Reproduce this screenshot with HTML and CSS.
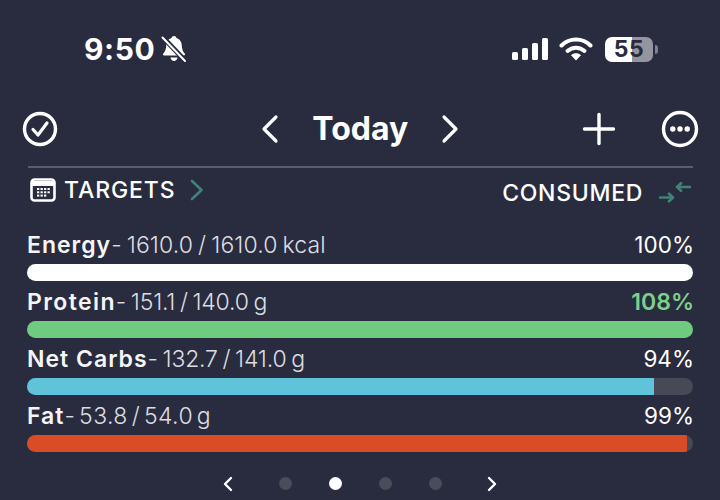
FILE: index.html
```html
<!DOCTYPE html>
<html lang="en">
<head>
<meta charset="utf-8">
<title>Today</title>
<link rel="stylesheet" href="styles.css">
</head>
<body>
<div class="screen">
  <div class="status">
    <div class="status-left">
      <span class="time">9:50</span>
      <svg class="bell" width="26" height="28" viewBox="0 0 26 28"><path d="M13 1c1.400 0 2.300 .9 2.400 2.100 3.400 1 5.200 3.800 5.400 7.400.2 3.800 1 6 2.900 8 .8.900.3 2-.9 2H3.200c-1.200 0-1.700-1.100-.9-2 1.900-2 2.700-4.200 2.900-8 .2-3.600 2-6.400 5.400-7.400.1-1.200 1-2.100 2.400-2.100z" fill="#fff"/><path d="M9.500 22.500h7c-.3 2-1.700 3.500-3.500 3.500s-3.200-1.500-3.500-3.500z" fill="#fff"/><path d="M1.500 2 L24.500 26" stroke="#292c3e" stroke-width="5"/><path d="M1.500 2.500 L24 26" stroke="#fff" stroke-width="2" stroke-linecap="round"/></svg>
    </div>
    <div class="status-right">
      <svg width="37" height="24" viewBox="0 0 37 24"><rect x="1" y="15" width="6" height="8" rx="1.500" fill="#fff"/><rect x="11" y="11" width="6" height="12" rx="1.500" fill="#fff"/><rect x="21" y="6" width="6" height="17" rx="1.500" fill="#fff"/><rect x="31" y="1" width="6" height="22" rx="1.500" fill="#fff"/></svg>
      <svg width="34" height="26" viewBox="0 0 34 26"><path d="M2.500 9.500C10.500 1.500 23.500 1.500 31.500 9.500" fill="none" stroke="#fff" stroke-width="4" stroke-linecap="round"/><path d="M8.500 15C13.500 10.500 20.500 10.500 25.500 15" fill="none" stroke="#fff" stroke-width="4" stroke-linecap="round"/><path d="M12 19.300C15 16.700 19 16.700 22 19.300L17 24.500z" fill="#fff"/></svg>
      <div class="battery">
        <div class="battery-body"><span class="battery-num">55</span></div>
        <div class="battery-tip"></div>
      </div>
    </div>
  </div>

  <div class="toolbar">
    <svg width="36" height="36" viewBox="0 0 36 36"><circle cx="18" cy="18" r="15.500" fill="none" stroke="#fff" stroke-width="3.400"/><path d="M11 18.500l5 5.500 9-12" fill="none" stroke="#fff" stroke-width="3.200" stroke-linecap="round" stroke-linejoin="round"/></svg>
    <div class="date-nav">
      <svg width="20" height="30" viewBox="0 0 20 30"><path d="M16 3 L4 15 L16 27" fill="none" stroke="#fff" stroke-width="3.200" stroke-linecap="round" stroke-linejoin="round"/></svg>
      <span class="today">Today</span>
      <svg width="20" height="30" viewBox="0 0 20 30"><path d="M4 3 L16 15 L4 27" fill="none" stroke="#fff" stroke-width="3.200" stroke-linecap="round" stroke-linejoin="round"/></svg>
    </div>
    <div class="tool-right">
      <svg width="34" height="34" viewBox="0 0 34 34"><path d="M17 2.500V31.500M2.500 17H31.500" fill="none" stroke="#fff" stroke-width="3.400" stroke-linecap="round"/></svg>
      <svg width="38" height="38" viewBox="0 0 38 38"><circle cx="19" cy="19" r="16.500" fill="none" stroke="#fff" stroke-width="3.400"/><circle cx="11.800" cy="19" r="2.700" fill="#fff"/><circle cx="19" cy="19" r="2.700" fill="#fff"/><circle cx="26.200" cy="19" r="2.700" fill="#fff"/></svg>
    </div>
  </div>

  <div class="sub">
    <div class="sub-left">
      <svg width="26" height="24" viewBox="0 0 26 24"><rect x="1.500" y="1.500" width="23" height="21" rx="3" fill="none" stroke="#fff" stroke-width="2.600"/><path d="M1.500 5.500h23" stroke="#fff" stroke-width="5"/><g fill="#fff"><rect x="7" y="10" width="2.300" height="2"/><rect x="10.500" y="10" width="2.300" height="2"/><rect x="14" y="10" width="2.300" height="2"/><rect x="17.500" y="10" width="2.300" height="2"/><rect x="7" y="13.300" width="2.300" height="2"/><rect x="10.500" y="13.300" width="2.300" height="2"/><rect x="14" y="13.300" width="2.300" height="2"/><rect x="17.500" y="13.300" width="2.300" height="2"/><rect x="7" y="16.600" width="2.300" height="2"/><rect x="10.500" y="16.600" width="2.300" height="2"/><rect x="14" y="16.600" width="2.300" height="2"/></g></svg>
      <span class="sub-label sub-label-wide">TARGETS</span>
      <svg class="sub-chev" width="14" height="22" viewBox="0 0 14 22"><path d="M2 2 L11.500 11 L2 20" fill="none" stroke="#3f8277" stroke-width="2.600" stroke-linecap="round" stroke-linejoin="round"/></svg>
    </div>
    <div class="sub-right">
      <span class="sub-label">CONSUMED</span>
      <svg width="32" height="22" viewBox="0 0 32 22"><g fill="none" stroke="#3f8277" stroke-width="2.600" stroke-linecap="round" stroke-linejoin="round"><path d="M31 5H18M22 1.200 18 5l4 3.800"/><path d="M1 15.500H14M10 11.700 14 15.500l-4 3.800"/></g></svg>
    </div>
  </div>

  <div class="macros">
    <div class="macro">
      <div class="macro-head"><div><span class="macro-name">Energy</span><span class="macro-val">- 1610.0 / 1610.0 kcal</span></div><span class="macro-pct">100%</span></div>
      <div class="track"><div class="fill fill-energy" style="width:100%"></div></div>
    </div>
    <div class="macro">
      <div class="macro-head"><div><span class="macro-name name-wide">Protein</span><span class="macro-val val-tight">- 151.1 / 140.0 g</span></div><span class="macro-pct pct-green">108%</span></div>
      <div class="track"><div class="fill fill-protein" style="width:100%"></div></div>
    </div>
    <div class="macro">
      <div class="macro-head"><div><span class="macro-name">Net Carbs</span><span class="macro-val val-tight">- 132.7 / 141.0 g</span></div><span class="macro-pct">94%</span></div>
      <div class="track"><div class="fill fill-carbs" style="width:94.2%"></div></div>
    </div>
    <div class="macro">
      <div class="macro-head"><div><span class="macro-name">Fat</span><span class="macro-val val-close">- 53.8 / 54.0 g</span></div><span class="macro-pct">99%</span></div>
      <div class="track"><div class="fill fill-fat" style="width:99.1%"></div></div>
    </div>
  </div>

  <div class="pager">
    <svg width="12" height="16" viewBox="0 0 12 16"><path d="M9 2 L3 8 L9 14" fill="none" stroke="#fff" stroke-width="2.400" stroke-linecap="round" stroke-linejoin="round"/></svg>
    <div class="dots">
      <span class="dot"></span><span class="dot dot-on"></span><span class="dot"></span><span class="dot"></span>
    </div>
    <svg width="12" height="16" viewBox="0 0 12 16"><path d="M3 2 L9 8 L3 14" fill="none" stroke="#fff" stroke-width="2.400" stroke-linecap="round" stroke-linejoin="round"/></svg>
  </div>
</div>
</body>
</html>
```
FILE: styles.css
```css
* { box-sizing: border-box; }
html, body { margin: 0; padding: 0; }
body { width: 720px; height: 500px; overflow: hidden; background: #292c3e; color: #fff; font-family: Inter, "Liberation Sans", sans-serif; }
svg { display: block; flex: none; }
.screen { width: 720px; height: 500px; display: flex; flex-direction: column; background: #292c3e; }

.status { height: 62px; padding: 36px 62px 0 84px; display: flex; justify-content: space-between; align-items: flex-start; }
.status-left { display: flex; align-items: center; gap: 6px; height: 26px; }
.time { font-size: 30px; font-weight: 700; line-height: 26px; letter-spacing: 0.6px; }
.status-right { display: flex; align-items: center; gap: 11px; height: 26px; }
.battery { display: flex; align-items: center; gap: 2px; margin-left: 1px; }
.battery-body { width: 48px; height: 25px; border-radius: 7px; background: linear-gradient(90deg, #fff 0, #fff 56%, #94959f 56%, #94959f 100%); display: flex; align-items: center; justify-content: center; }
.battery-num { font-size: 23px; font-weight: 700; line-height: 25px; color: #292c3e; letter-spacing: 0.5px; }
.battery-tip { width: 3px; height: 9px; border-radius: 0 3px 3px 0; background: #80818d; }

.toolbar { margin-top: 42px; height: 49px; padding: 0 21.5px 0 22px; display: grid; grid-template-columns: 1fr auto 1fr; align-items: center; }
.date-nav { display: flex; align-items: center; gap: 32px; }
.today { font-size: 32px; font-weight: 700; line-height: 40px; color: #fff; }
.tool-right { display: flex; align-items: center; justify-content: flex-end; gap: 44.5px; }

.sub { margin: 13px 27px 0 28px; border-top: 2px solid #5b5d6c; height: 50px; padding: 7px 2px 0 2px; display: flex; justify-content: space-between; align-items: flex-start; }
.sub-left { display: flex; align-items: center; gap: 8px; }
.sub-right { display: flex; align-items: center; gap: 16px; margin-top: 3px; }
.sub-label { font-size: 23px; font-weight: 500; line-height: 30px; letter-spacing: 0.7px; }
.sub-label-wide { letter-spacing: 0.9px; }
.sub-chev { margin-left: 7px; }

.macros { margin: 15px 27px 0; display: flex; flex-direction: column; gap: 7.5px; }
.macro { display: flex; flex-direction: column; }
.macro-head { height: 28px; display: flex; justify-content: space-between; align-items: center; font-size: 23px; line-height: 28px; }
.macro-name { font-weight: 600; color: #f5f5f7; letter-spacing: 1px; }
.name-wide { letter-spacing: 1.4px; }
.macro-val { font-weight: 300; color: #dcdde2; word-spacing: -1.5px; letter-spacing: 0.1px; }
.val-tight { letter-spacing: -0.2px; }
.val-close { word-spacing: -3px; letter-spacing: 0.4px; }
.macro-pct { font-size: 22.5px; font-weight: 400; margin-right: -1px; }
.pct-green { color: #7dd08b; font-size: 23px; font-weight: 600; }
.track { margin-top: 5px; height: 16.5px; border-radius: 9px; background: #474957; overflow: hidden; }
.fill { height: 100%; }
.fill-energy { background: #fff; }
.fill-protein { background: #6fcb80; }
.fill-carbs { background: #5fc3d9; }
.fill-fat { background: #da4c26; }

.pager { margin-top: 24px; padding: 0 222px; display: flex; justify-content: space-between; align-items: center; }
.dots { display: flex; gap: 37px; align-items: center; }
.dot { width: 13px; height: 13px; border-radius: 50%; background: #4a4c5b; }
.dot-on { background: #fff; }
```
